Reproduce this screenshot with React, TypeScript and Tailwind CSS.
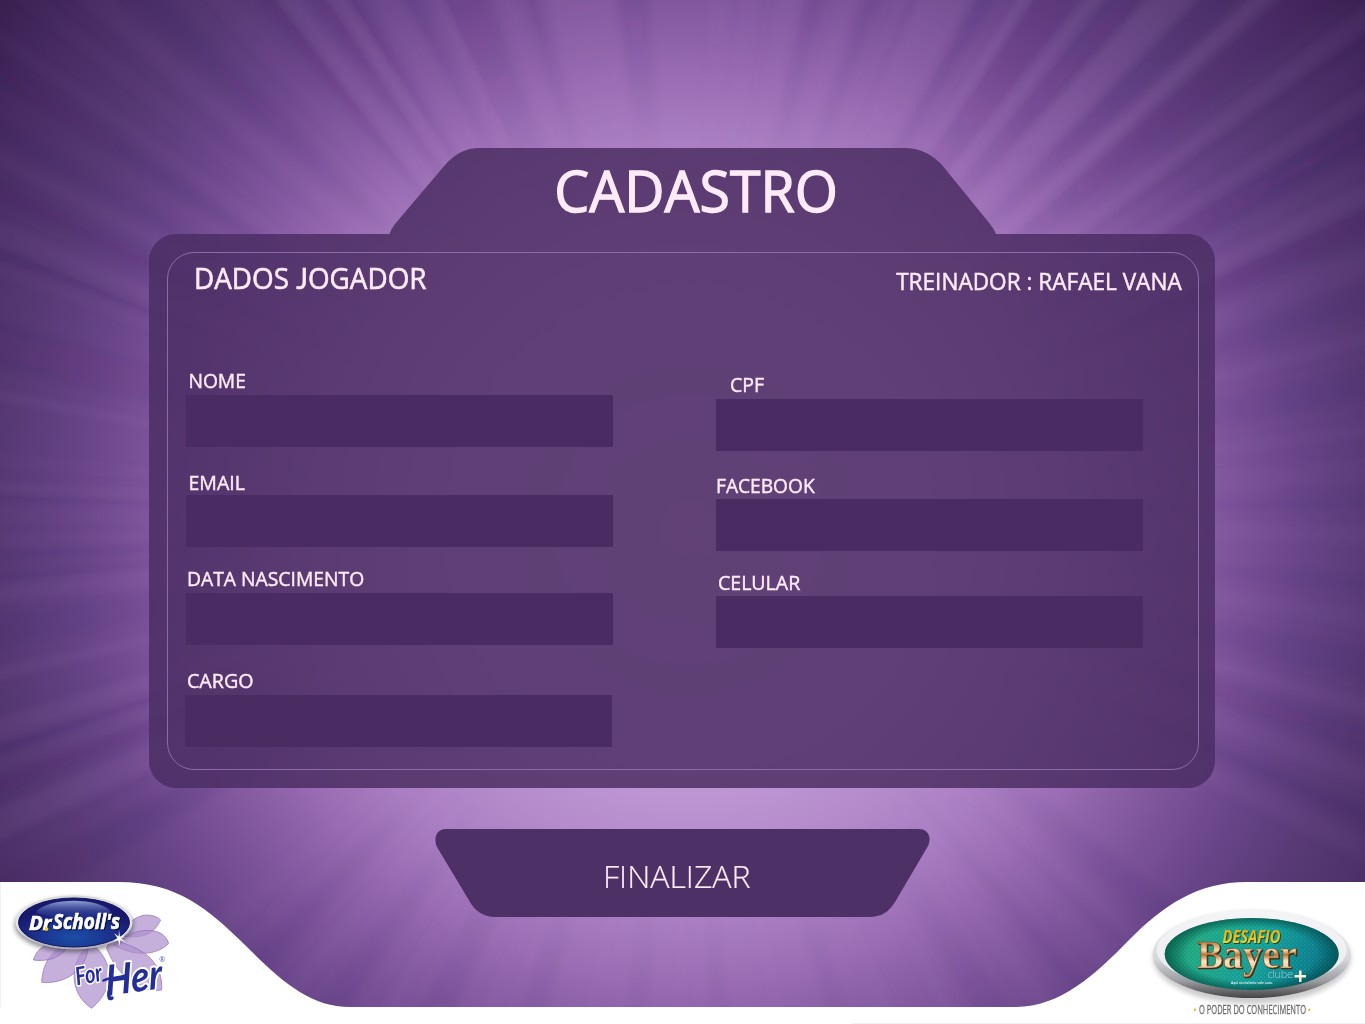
const CX = 683;
const CY = 520;

// Light rays: [edge x, edge y, spread, strength]; negative strength is a shadow.
const RAYS: [number, number, number, number][] = [
  [268, 0, 10, -0.14], [290, 0, 9, 0.09], [322, 0, 10, -0.12], [338, 0, 7, 0.1], [352, 0, 7, -0.14],
  [385, 0, 14, 0.06], [412, 0, 6, -0.08], [436, 0, 6, 0.06], [466, 0, 24, -0.12], [507, 0, 8, 0.05],
  [531, 0, 6, -0.1], [580, 0, 36, 0.12], [634, 0, 17, -0.1], [720, 0, 12, 0.06], [750, 0, 12, 0.06],
  [788, 0, 12, 0.08], [815, 0, 11, -0.1], [847, 0, 9, 0.06], [872, 0, 9, -0.09], [902, 0, 5, 0.06],
  [944, 0, 26, 0.12], [986, 0, 9, -0.1], [1023, 0, 5, 0.15], [1055, 0, 22, -0.14], [1093, 0, 6, 0.13],
  [1128, 0, 18, -0.1], [1170, 0, 20, 0.16], [1215, 0, 16, -0.06], [1260, 0, 10, 0.18], [1310, 0, 20, -0.12],
  [1365, 17, 11, 0.12], [1365, 36, 6, -0.08], [1365, 96, 9, 0.09], [1365, 130, 18, -0.1], [1365, 168, 9, 0.05],
  [1365, 193, 12, 0.12], [1365, 222, 14, -0.12], [1365, 262, 16, 0.06], [1365, 300, 14, -0.05],
  [1365, 338, 10, 0.06], [1365, 384, 18, -0.05], [1365, 430, 8, 0.05], [1365, 470, 14, 0.04],
  [1365, 502, 8, -0.05], [1365, 535, 12, 0.05], [1365, 584, 10, -0.05], [1365, 618, 12, 0.05],
  [1365, 664, 18, -0.06], [1365, 706, 10, 0.08], [1365, 740, 14, -0.07], [1365, 776, 14, 0.06],
  [1365, 815, 9, -0.09], [1365, 850, 14, 0.06], [1300, 1024, 22, -0.06], [1230, 1024, 12, 0.05],
  [1170, 1024, 18, 0.04], [1110, 1024, 10, -0.06], [1060, 1024, 14, 0.05], [1000, 1024, 18, -0.05],
  [955, 1024, 9, 0.05], [890, 1024, 12, 0.05], [842, 1024, 12, -0.05], [780, 1024, 8, 0.05],
  [720, 1024, 10, -0.05], [680, 1024, 8, 0.05], [636, 1024, 12, -0.05], [590, 1024, 8, 0.05],
  [530, 1024, 14, -0.07], [485, 1024, 9, 0.05], [430, 1024, 18, -0.07], [380, 1024, 9, 0.05],
  [320, 1024, 16, -0.06], [265, 1024, 12, 0.05], [200, 1024, 16, -0.06], [110, 1024, 18, 0.04],
  [0, 900, 20, -0.08], [0, 824, 17, 0.12], [0, 785, 8, -0.12], [0, 765, 6, 0.05], [0, 750, 6, -0.1],
  [0, 728, 12, 0.1], [0, 673, 7, 0.09], [0, 630, 20, -0.05], [0, 594, 9, 0.07], [0, 577, 4, -0.08],
  [0, 556, 4, -0.09], [0, 540, 6, 0.05], [0, 515, 10, 0.04], [0, 496, 4, -0.08], [0, 487, 4, 0.1],
  [0, 460, 8, 0.03], [0, 396, 5, 0.1], [0, 345, 26, -0.07], [0, 270, 7, 0.05], [0, 252, 6, -0.09],
  [0, 232, 12, 0.08], [0, 192, 9, -0.12], [0, 158, 9, 0.06], [0, 130, 9, -0.05], [30, 0, 12, 0.03],
  [0, 36, 8, 0.05], [0, 70, 10, -0.08], [95, 0, 14, 0.06], [150, 0, 14, -0.07], [222, 0, 14, 0.03],
];

function rayPoints(x: number, y: number, spread: number) {
  const dx = x - CX;
  const dy = y - CY;
  const len = Math.hypot(dx, dy);
  const ox = (-dy / len) * spread;
  const oy = (dx / len) * spread;
  const ex = CX + dx * 1.15;
  const ey = CY + dy * 1.15;
  return `${CX},${CY} ${ex + ox},${ey + oy} ${ex - ox},${ey - oy}`;
}

function Backdrop() {
  return (
    <svg className="absolute inset-0" width="1365" height="1024" viewBox="0 0 1365 1024" aria-hidden="true">
      <defs>
        <radialGradient id="glow" gradientUnits="userSpaceOnUse" cx="690" cy="530" r="880">
          <stop offset="0" stopColor="#cda9dd" />
          <stop offset="0.29" stopColor="#bf97d3" />
          <stop offset="0.44" stopColor="#ab7fc3" />
          <stop offset="0.52" stopColor="#986bb2" />
          <stop offset="0.61" stopColor="#7f559c" />
          <stop offset="0.7" stopColor="#674487" />
          <stop offset="0.79" stopColor="#563873" />
          <stop offset="0.9" stopColor="#472b62" />
          <stop offset="1" stopColor="#371e4e" />
        </radialGradient>
        <radialGradient id="light" gradientUnits="userSpaceOnUse" cx="683" cy="520" r="860">
          <stop offset="0.4" stopColor="#cf9fdc" stopOpacity="0" />
          <stop offset="0.65" stopColor="#cf9fdc" stopOpacity="0.75" />
          <stop offset="1" stopColor="#cf9fdc" stopOpacity="0.45" />
        </radialGradient>
        <radialGradient id="shade" gradientUnits="userSpaceOnUse" cx="683" cy="520" r="860">
          <stop offset="0.4" stopColor="#301650" stopOpacity="0" />
          <stop offset="0.65" stopColor="#301650" stopOpacity="0.75" />
          <stop offset="1" stopColor="#301650" stopOpacity="0.65" />
        </radialGradient>
        <filter id="soft" x="-5%" y="-5%" width="110%" height="110%">
          <feGaussianBlur stdDeviation="3.5" />
        </filter>
      </defs>
      <rect width="1365" height="1024" fill="url(#glow)" />
      <g filter="url(#soft)">
        {RAYS.map(([x, y, spread, strength], i) => (
          <polygon
            key={i}
            points={rayPoints(x, y, spread)}
            fill={strength > 0 ? "url(#light)" : "url(#shade)"}
            opacity={Math.abs(strength)}
          />
        ))}
      </g>
    </svg>
  );
}

function FooterArt() {
  return (
    <svg className="absolute bottom-0 left-0" width="1365" height="144" viewBox="0 880 1365 144">
      <defs>
        <linearGradient id="silver" x1="0" y1="0" x2="0" y2="1">
          <stop offset="0" stopColor="#f7f7f9" />
          <stop offset="0.55" stopColor="#d6d7da" />
          <stop offset="0.8" stopColor="#9d9ea1" />
          <stop offset="1" stopColor="#444446" />
        </linearGradient>
        <linearGradient id="rim" x1="0" y1="0" x2="0" y2="1">
          <stop offset="0" stopColor="#d5d9d8" />
          <stop offset="0.5" stopColor="#e6e7ea" />
          <stop offset="1" stopColor="#a9abb5" />
        </linearGradient>
        <radialGradient id="navy" cx="0.5" cy="0.8" r="0.6">
          <stop offset="0" stopColor="#1b4ea6" />
          <stop offset="0.6" stopColor="#1b2f8c" />
          <stop offset="1" stopColor="#18196c" />
        </radialGradient>
        <linearGradient id="gloss" x1="0" y1="0" x2="0" y2="1">
          <stop offset="0" stopColor="#9dafe0" stopOpacity="0.9" />
          <stop offset="1" stopColor="#2b4aa5" stopOpacity="0.1" />
        </linearGradient>
        <linearGradient id="teal" x1="0" y1="0" x2="1" y2="0.2">
          <stop offset="0" stopColor="#0c8a58" />
          <stop offset="0.25" stopColor="#1fa783" />
          <stop offset="0.65" stopColor="#129c98" />
          <stop offset="1" stopColor="#08758a" />
        </linearGradient>
        <radialGradient id="tealEdge">
          <stop offset="0.75" stopColor="#02443f" stopOpacity="0" />
          <stop offset="1" stopColor="#02443f" stopOpacity="0.65" />
        </radialGradient>
        <linearGradient id="gold" x1="0" y1="0" x2="0" y2="1">
          <stop offset="0.2" stopColor="#a9682f" />
          <stop offset="0.42" stopColor="#f6dcae" />
          <stop offset="0.52" stopColor="#b4763c" />
          <stop offset="0.66" stopColor="#fae6c4" />
          <stop offset="1" stopColor="#d7a26a" />
        </linearGradient>
        <linearGradient id="yellow" x1="0" y1="0" x2="0" y2="1">
          <stop offset="0" stopColor="#d9a514" />
          <stop offset="1" stopColor="#f5dc35" />
        </linearGradient>
        <pattern id="dots" width="4" height="4" patternUnits="userSpaceOnUse">
          <circle cx="1" cy="1" r="0.6" fill="#7fe0c8" fillOpacity="0.5" />
          <circle cx="3" cy="3" r="0.5" fill="#7fe0c8" fillOpacity="0.35" />
        </pattern>
        <filter id="shadow" x="-20%" y="-20%" width="140%" height="150%">
          <feGaussianBlur stdDeviation="2.5" />
        </filter>
      </defs>

      <path
        d="M0 882H118C178 882 208 909 245 945C281 981 310 1007 350 1007H1015C1060 1007 1094 976 1130 939C1163 906 1197 882 1247 882H1365V1024H0Z"
        fill="#ffffff"
      />
      <path d="M852 1023.5H1365M0.5 882V1007" stroke="#f1f1f3" />

      <g fill="#ad91cc" fillOpacity="0.72" stroke="#9672ba" strokeWidth="2.2" transform="translate(0 885) scale(.3333)">
        <path d="M375 130C410 80 460 84 482 105C460 150 430 158 375 155Z" />
        <path d="M360 170C400 128 490 120 506 175C465 218 390 210 340 180Z" />
        <path d="M330 165C440 185 490 240 485 315C420 325 350 270 320 190Z" />
        <path d="M273 175C205 225 205 325 275 370C345 310 345 230 273 175Z" />
        <path d="M265 180C190 165 130 200 125 292C190 298 262 260 265 180Z" />
        <path d="M200 170C145 165 110 190 100 225C145 232 190 215 205 180Z" />
      </g>

      <ellipse cx="74" cy="925" rx="59" ry="27" fill="#000000" opacity="0.45" filter="url(#shadow)" />
      <ellipse cx="74" cy="922.5" rx="58.5" ry="27" fill="url(#rim)" />
      <ellipse cx="74" cy="922.5" rx="55.5" ry="24.5" fill="url(#navy)" stroke="#15165e" strokeWidth="1" />
      <path d="M36 912C48 897 100 897 111 912C100 920 48 920 36 912Z" fill="url(#gloss)" />
      <g
        className="drop-shadow-[1px_1px_0.5px_#0b0d3c]"
        fontFamily="'Open Sans', sans-serif"
        fontStyle="italic"
        fontWeight="700"
        fill="#ffffff"
        stroke="#ffffff"
        strokeWidth="0.7"
      >
        <text x="29" y="930" fontSize="20" textLength="22.5" lengthAdjust="spacingAndGlyphs">Dr</text>
        <text x="53" y="928.7" fontSize="21.5" textLength="67" lengthAdjust="spacingAndGlyphs">Scholl's</text>
      </g>
      <circle cx="46.5" cy="929" r="1.9" fill="#f5d312" />
      <path d="M119 930L120 937L124.5 935L121 938.4L126 942.5L120.3 940L119.5 946L118.2 940L113.5 941.5L117.3 938L114 933L118.6 936.5Z" fill="#ffffff" />

      <g fontFamily="Lato, sans-serif" fontStyle="italic" fontWeight="700" fill="#232f96" stroke="#ffffff" strokeWidth="4" strokeLinejoin="round" paintOrder="stroke">
        <text transform="translate(77 985.5) rotate(-11)" fontSize="25" textLength="27" lengthAdjust="spacingAndGlyphs" strokeWidth="3">For</text>
        <text transform="translate(106 996) rotate(-8) skewX(-6)" fontSize="42" textLength="57" lengthAdjust="spacingAndGlyphs">Her</text>
      </g>
      <path d="M103.5 980.5C109 977 116 979 127 975" fill="none" stroke="#232f96" strokeWidth="2.6" strokeLinecap="round" />
      <path d="M109 992C108.5 997 109 1000 112 998" fill="none" stroke="#232f96" strokeWidth="3.4" strokeLinecap="round" />
      <text x="159.3" y="961.5" fontFamily="'Open Sans', sans-serif" fontSize="7" fill="#4a55a8">®</text>

      <ellipse cx="1252" cy="958" rx="99" ry="46" fill="#000000" opacity="0.2" filter="url(#shadow)" />
      <ellipse cx="1251.7" cy="954.5" rx="99" ry="43.5" fill="url(#silver)" />
      <ellipse cx="1251.7" cy="950" rx="95" ry="37.5" fill="#f4f4f6" opacity="0.8" />
      <ellipse cx="1251.7" cy="954" rx="87" ry="36" fill="url(#teal)" />
      <ellipse cx="1251.7" cy="954" rx="87" ry="36" fill="url(#dots)" />
      <ellipse cx="1251.7" cy="954" rx="87" ry="36" fill="url(#tealEdge)" />
      <text
        className="drop-shadow-[1px_1px_0.5px_#1d4a2c]"
        x="1222.5"
        y="943.3"
        fontFamily="'Open Sans', sans-serif"
        fontStyle="italic"
        fontWeight="700"
        fontSize="17"
        textLength="58"
        lengthAdjust="spacingAndGlyphs"
        fill="url(#yellow)"
      >
        DESAFIO
      </text>
      <text
        className="drop-shadow-[1.5px_1.5px_0.5px_#3c2411]"
        x="1197"
        y="967.8"
        fontFamily="'Liberation Serif', serif"
        fontWeight="700"
        fontSize="41"
        textLength="100"
        lengthAdjust="spacingAndGlyphs"
        fill="url(#gold)"
        stroke="#7a4a22"
        strokeWidth="0.6"
      >
        Bayer
      </text>
      <text x="1267.5" y="978" fontFamily="'Open Sans', sans-serif" fontSize="11" fontWeight="300" textLength="25.5" fill="#9dc9cc">clube</text>
      <path d="M1300.3 970.5V982M1294.5 976.2H1306" stroke="#fdf3d6" strokeWidth="2.4" />
      <text x="1231" y="984.3" fontFamily="'Open Sans', sans-serif" fontSize="4.2" fontWeight="600" textLength="42" lengthAdjust="spacingAndGlyphs" fill="#e7f7f3">Aqui seu talento vale ouro.</text>
      <text x="1199" y="1014.3" fontFamily="'Open Sans', sans-serif" fontSize="12.5" textLength="107" lengthAdjust="spacingAndGlyphs" fill="#6a6a6c" stroke="#6a6a6c" strokeWidth="0.3">O PODER DO CONHECIMENTO</text>
      <circle cx="1195" cy="1009.7" r="1.2" fill="#f0b53a" />
      <circle cx="1309.3" cy="1009.7" r="1.2" fill="#f0b53a" />
    </svg>
  );
}

function Field({ id, label, className, labelClass }: { id: string; label: string; className: string; labelClass: string }) {
  return (
    <div className={`flex w-[427px] flex-col ${className}`}>
      <label
        htmlFor={id}
        className={`h-7 origin-left text-[20.3px] leading-[27px] whitespace-nowrap [-webkit-text-stroke:0.45px_#ffeaf8] ${labelClass}`}
      >
        {label}
      </label>
      <input id={id} className="h-[52px] w-full bg-[#4a2b62] px-4 text-xl outline-none" />
    </div>
  );
}

export default function App() {
  return (
    <main className="relative h-[1024px] w-[1365px] overflow-hidden bg-[#553673] font-['Open_Sans',sans-serif] text-[#ffeaf8]">
      <Backdrop />
      <FooterArt />
      <form className="relative flex flex-col pt-[148px]" onSubmit={(e) => e.preventDefault()}>
        <header className="relative ml-[389px] h-[86px] w-[607px]">
          <svg className="absolute inset-0" width="607" height="86" viewBox="0 0 607 86" aria-hidden="true">
            <path d="M0.5 86Q2 81 6 76L56 17C66 6 76 0 91 0H516C531 0 544 7 553 17L601 76Q605 81 607 86Z" fill="#4a2d62" fillOpacity="0.83" />
          </svg>
          <h1 className="relative origin-left scale-x-[0.99] pl-[167px] text-[56px] leading-[84px] [-webkit-text-stroke:1.3px_#ffeaf8]">CADASTRO</h1>
        </header>

        <section className="ml-[149px] h-[554px] w-[1066px] rounded-[27px] bg-[#4a2d62]/83 p-[18px]">
          <div className="h-[518px] w-[1032px] rounded-[27px] border border-[#8d6aa8]">
            <div className="flex h-[53px] items-start justify-between pt-[5px] pr-4 pl-[26px]">
              <h2 className="origin-left scale-x-[0.96] text-[29px] leading-10 [-webkit-text-stroke:0.6px_#ffeaf8]">
                DADOS <span className="font-['Lato',sans-serif]">J</span>OGADOR
              </h2>
              <p className="origin-right scale-x-[0.922] pt-[3px] text-[24.5px] leading-10 [-webkit-text-stroke:0.5px_#ffeaf8]">
                TREINADOR : RAFAEL VANA
              </p>
            </div>
            <div className="flex gap-[103px] pl-[18px]">
              <div className="flex flex-col">
                <Field id="nome" label="NOME" className="mt-[61px]" labelClass="scale-x-[0.95] pl-[2.5px]" />
                <Field id="email" label="EMAIL" className="mt-5" labelClass="scale-x-[0.965] pl-[2.5px] pt-0.5" />
                <Field id="nascimento" label="DATA NASCIMENTO" className="mt-[18px]" labelClass="scale-x-[0.952] pl-px" />
                <Field id="cargo" label="CARGO" className="-ml-px mt-[22px]" labelClass="scale-x-[0.97] pl-[2px]" />
              </div>
              <div className="flex flex-col">
                <Field id="cpf" label="CPF" className="mt-[65px]" labelClass="scale-x-[0.96] pl-[14.5px]" />
                <Field id="facebook" label="FACEBOOK" className="mt-5" labelClass="scale-x-[0.945] pt-px" />
                <Field id="celular" label="CELULAR" className="mt-[17px]" labelClass="scale-x-[0.965] pl-[2px] pt-px" />
              </div>
            </div>
          </div>
        </section>

        <button type="submit" className="relative mt-[41px] ml-[435px] h-[88px] w-[495px]">
          <svg className="absolute inset-0" width="495" height="88" viewBox="0 0 495 88" aria-hidden="true">
            <path d="M11 0H484C493 0 497 8 493 17L460 73C454 83 446 88 434 88H61C49 88 40 82 35 73L2 18C-2 8 2 0 11 0Z" fill="#4d3065" />
          </svg>
          <span className="relative block pt-[3px] pl-[168px] text-left text-[32px] leading-[88px] font-light [-webkit-text-stroke:0.2px_#ffeaf8]">
            FINALIZAR
          </span>
        </button>
      </form>
    </main>
  );
}
